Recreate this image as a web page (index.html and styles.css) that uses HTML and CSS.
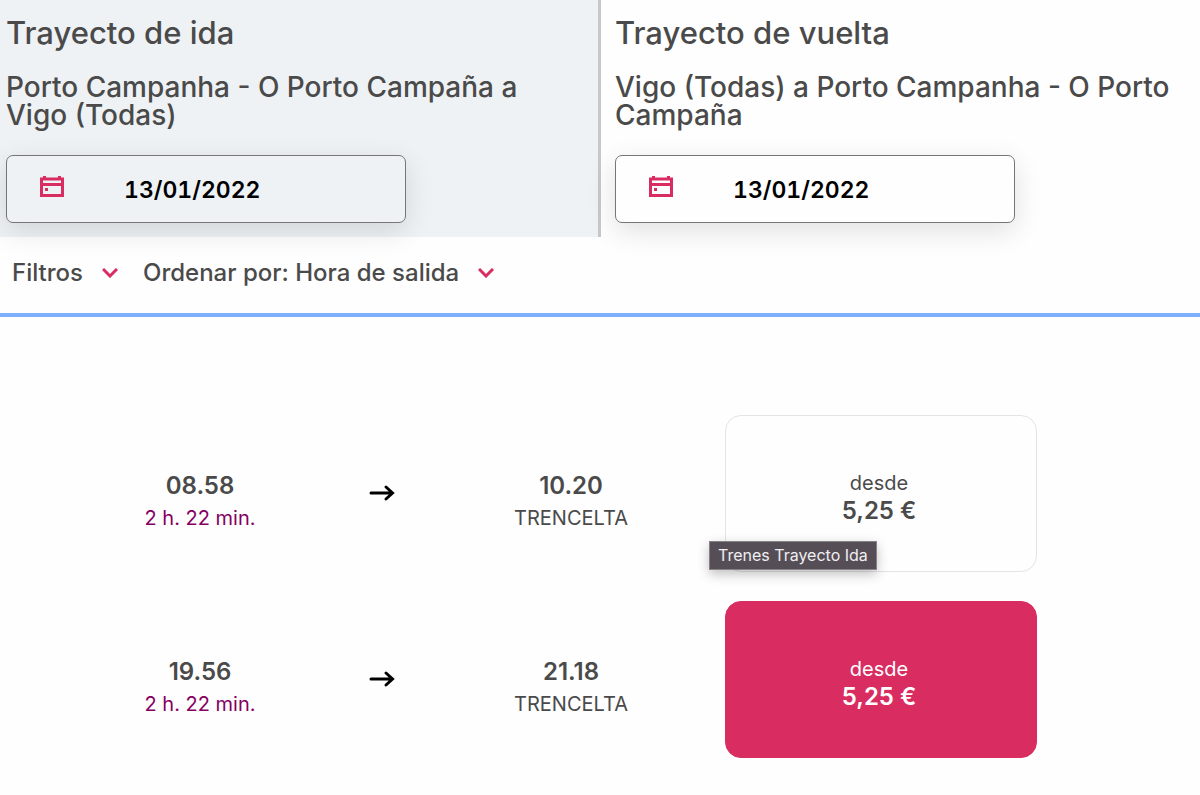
FILE: index.html
```html
<!DOCTYPE html>
<html lang="es">
<head>
<meta charset="utf-8">
<meta name="viewport" content="width=device-width, initial-scale=1">
<title>Selecciona tu viaje</title>
<link rel="stylesheet" href="styles.css">
</head>
<body>
<svg class="sprite" aria-hidden="true">
  <symbol id="calendar" viewBox="0 0 24 22">
    <path d="M3 0h3v2H3zM18 0h3v2h-3z" fill="currentColor"/>
    <path d="M1.500 3h21v16.500h-21z" fill="none" stroke="currentColor" stroke-width="3"/>
    <path d="M1 7h22v3H1zM5 12h3v3H5z" fill="currentColor"/>
  </symbol>
  <symbol id="chevron" viewBox="0 0 16 10">
    <path d="M1 1l7 7 7-7" fill="none" stroke="currentColor" stroke-width="3"/>
  </symbol>
  <symbol id="arrow" viewBox="0 0 26 18">
    <path d="M2 9h21M17 3l6.500 6-6.500 6" fill="none" stroke="currentColor" stroke-width="3" stroke-linecap="round"/>
  </symbol>
</svg>
<header class="journeys">
  <section class="journey journey-active">
    <h2 class="journey-title">Trayecto de ida</h2>
    <p class="journey-route">Porto Campanha - O Porto Campaña a Vigo (Todas)</p>
    <label class="date-box">
      <svg class="icon-calendar" role="img" aria-label="Fecha de ida"><use href="#calendar"/></svg>
      <input class="date-input" type="text" value="13/01/2022">
    </label>
  </section>
  <section class="journey">
    <h2 class="journey-title">Trayecto de vuelta</h2>
    <p class="journey-route">Vigo (Todas) a Porto Campanha - O Porto Campaña</p>
    <label class="date-box">
      <svg class="icon-calendar" role="img" aria-label="Fecha de vuelta"><use href="#calendar"/></svg>
      <input class="date-input" type="text" value="13/01/2022">
    </label>
  </section>
</header>
<nav class="filters">
  <button class="filter" type="button">Filtros <svg class="icon-chevron" aria-hidden="true"><use href="#chevron"/></svg></button>
  <button class="filter" type="button">Ordenar por: Hora de salida <svg class="icon-chevron" aria-hidden="true"><use href="#chevron"/></svg></button>
</nav>
<main class="trains">
  <article class="train">
    <div class="stop"><span class="time">08.58</span><span class="duration">2 h. 22 min.</span></div>
    <svg class="icon-arrow" aria-hidden="true"><use href="#arrow"/></svg>
    <div class="stop"><span class="time">10.20</span><span class="service">TRENCELTA</span></div>
    <div class="fare">
      <button class="price" type="button" aria-describedby="tip"><span class="from">desde</span><span class="amount">5,25 €</span></button>
      <span class="tooltip" id="tip" role="tooltip">Trenes Trayecto Ida</span>
    </div>
  </article>
  <article class="train">
    <div class="stop"><span class="time">19.56</span><span class="duration">2 h. 22 min.</span></div>
    <svg class="icon-arrow" aria-hidden="true"><use href="#arrow"/></svg>
    <div class="stop"><span class="time">21.18</span><span class="service">TRENCELTA</span></div>
    <div class="fare">
      <button class="price price-selected" type="button"><span class="from">desde</span><span class="amount">5,25 €</span></button>
    </div>
  </article>
</main>
</body>
</html>
```
FILE: styles.css
```css
* { box-sizing: border-box; }
body {
  margin: 0;
  background: #fefefe;
  color: #4a4a4a;
  font-family: Inter, "Liberation Sans", sans-serif;
}
button, input { font: inherit; color: inherit; }
button { cursor: pointer; }
.sprite { display: none; }
.journeys { display: grid; grid-template-columns: 1fr 1fr; }
.journey { padding: 12px 15px 14px; }
.journey-active {
  padding-left: 6px;
  margin-right: -1px;
  background: #eef2f5;
  border-right: 3px solid #c8c8c8;
}
.journey-title { margin: 0 0 20px; font-size: 31px; line-height: 41px; font-weight: 500; }
.journey-route { margin: 0 0 26px; font-size: 28px; line-height: 28px; font-weight: 500; }
.journey-active .journey-route { padding-right: 40px; }
.date-box {
  display: flex;
  align-items: center;
  gap: 60px;
  max-width: 400px;
  height: 68px;
  padding: 0 16px 0 33px;
  border: 1px solid #767676;
  border-radius: 7px;
  box-shadow: 0 8px 28px rgba(0, 0, 0, .12);
  background: #fefefe;
}
.journey-active .date-box { background: #eef2f5; }
.icon-calendar { flex: none; width: 24px; height: 22px; margin-bottom: 4px; color: #d92d61; }
.date-input {
  width: 100%;
  min-width: 0;
  padding: 2px 0 0;
  border: 0;
  background: transparent;
  color: #000;
  font-size: 23px;
  font-weight: 600;
  font-variant-numeric: tabular-nums;
}
.filters {
  display: flex;
  gap: 25px;
  padding: 20px 12px 24px;
  border-bottom: 4px solid #7dafff;
}
.filter {
  display: flex;
  align-items: center;
  gap: 19px;
  padding: 0;
  border: 0;
  background: none;
  font-size: 24px;
  line-height: 32px;
  font-weight: 500;
}
.icon-chevron { width: 16px; height: 10px; color: #d92d61; }
.trains {
  display: flex;
  flex-direction: column;
  gap: 29px;
  padding: 98px 163px 37px 108px;
}
.train { display: grid; grid-template-columns: 184fr 180fr 198fr 367fr; align-items: center; }
.stop { display: flex; flex-direction: column; align-items: center; padding-top: 16px; line-height: 33px; }
.time, .amount { font-size: 24px; font-weight: 600; }
.duration, .service { font-size: 20px; }
.duration { color: #85005f; }
.icon-arrow { width: 26px; height: 18px; margin-bottom: 2px; justify-self: center; color: #000; }
.fare { position: relative; margin-left: 55px; }
.price {
  display: flex;
  flex-direction: column;
  align-items: center;
  justify-content: center;
  width: 100%;
  min-height: 157px;
  padding: 6px 4px 0 0;
  border: 1px solid #e4e4e4;
  border-radius: 16px;
  background: #fefefe;
  line-height: 28px;
}
.price-selected { background: #d92d61; border-color: #d92d61; color: #fff; }
.from { font-size: 20px; }
.tooltip {
  position: absolute;
  left: -16px;
  bottom: 2px;
  padding: 0 8px;
  border: 1px solid #868286;
  background: #554e57;
  box-shadow: 0 4px 12px rgba(0, 0, 0, .25);
  color: #f0eef0;
  font-size: 16px;
  line-height: 27px;
  white-space: nowrap;
}
```
